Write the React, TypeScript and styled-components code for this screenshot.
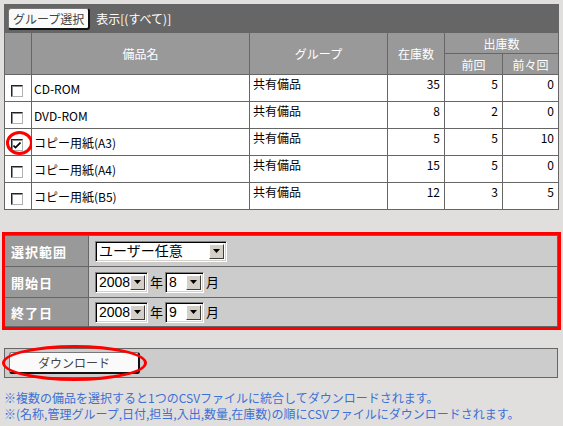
import React from 'react';
import styled, { createGlobalStyle } from 'styled-components';

const GlobalStyle = createGlobalStyle`
  body {
    margin: 0;
    background: #e0dfdd;
    font-family: "Noto Sans CJK JP", "Liberation Sans", sans-serif;
    font-size: 12px;
    color: #000;
  }
`;

const Page = styled.div`
  padding: 4px 0 0 4px;
  width: 554px;
`;

const DataTable = styled.table`
  border-collapse: collapse;
  table-layout: fixed;
  width: 554px;
`;

const BarCell = styled.td`
  background: #666;
  height: 27px;
  padding: 0 0 0 3px;
  border: 1px solid #666;
  color: #fff;
  vertical-align: middle;
`;

const BarInner = styled.div`
  display: flex;
  align-items: center;
  gap: 6px;
`;

const ClassicButton = styled.button<{ $w?: number }>`
  font-family: "Noto Sans CJK JP", sans-serif;
  font-size: 12px;
  color: #444;
  background: #fafafa;
  height: 22px;
  width: ${p => (p.$w ? `${p.$w}px` : 'auto')};
  padding: 0 4px;
  border: 1px solid #777;
  border-right: 2px solid #111;
  border-bottom: 2px solid #111;
  border-radius: 3px;
  line-height: 17px;
`;

const HeadCell = styled.th`
  background: #999;
  color: #fff;
  font-weight: normal;
  font-size: 12px;
  border: 1px solid #666;
  height: 20px;
  padding: 0;
  text-align: center;
`;

const Cell = styled.td<{ $align?: 'left' | 'right' | 'center'; $top?: boolean }>`
  box-sizing: border-box;
  background: #fff;
  border: 1px solid #666;
  height: 27px;
  padding: ${p => (p.$top ? '1px 4px 0 3px' : '2px 4px 0 2px')};
  line-height: 16px;
  text-align: ${p => p.$align ?? 'left'};
  vertical-align: ${p => (p.$top ? 'top' : 'middle')};
  position: relative;
  white-space: nowrap;
`;

const Check = styled.span`
  display: inline-flex;
  align-items: center;
  justify-content: center;
  box-sizing: border-box;
  width: 12px;
  height: 12px;
  margin-top: 2px;
  vertical-align: middle;
  background: #fff;
  border: 1px solid;
  border-color: #222 #b0b0b0 #b0b0b0 #222;
  box-shadow: inset 1px 1px 0 #909090;
`;

const Ring = styled.span<{ $l: number; $t: number; $w: number; $h: number }>`
  position: absolute;
  left: ${p => p.$l}px;
  top: ${p => p.$t}px;
  width: ${p => p.$w}px;
  height: ${p => p.$h}px;
  box-sizing: border-box;
  border: 3px solid #f00;
  border-radius: 50%;
  pointer-events: none;
`;

const FormWrap = styled.div`
  position: relative;
  margin-top: 25px;
  &::after {
    content: '';
    position: absolute;
    left: -2px;
    top: -3px;
    right: -3px;
    bottom: -3px;
    border: 3px solid #f00;
    pointer-events: none;
  }
`;

const FormTable = styled.table`
  border-collapse: collapse;
  table-layout: fixed;
  width: 554px;
`;

const LabelCell = styled.th`
  background: #999;
  color: #fff;
  font-size: 13px;
  font-weight: bold;
  letter-spacing: 1px;
  text-align: left;
  padding: 0 0 0 6px;
  border: 1px solid #666;
`;

const ValueCell = styled.td<{ $h: number }>`
  box-sizing: border-box;
  background: #ccc;
  height: ${p => p.$h}px;
  padding: 0 0 0 6px;
  border: 1px solid #666;
`;

const ValueRow = styled.div`
  display: flex;
  align-items: center;
  gap: 1px;
  font-size: 13px;
  line-height: 16px;
`;

const SelectBox = styled.div<{ $w: number }>`
  display: inline-flex;
  align-items: stretch;
  box-sizing: border-box;
  width: ${p => p.$w}px;
  height: 21px;
  background: #fff;
  border: 1px solid;
  border-color: #808080 #fff #fff #808080;
  box-shadow: inset 1px 1px 0 #000, inset -1px -1px 0 #d4d0c8;
  padding: 2px;
`;

const SelectText = styled.span`
  flex: 1;
  font-family: "Liberation Sans", "Noto Sans CJK JP", sans-serif;
  font-size: 14px;
  line-height: 15px;
  padding-left: 1px;
`;

const DropButton = styled.span`
  display: flex;
  align-items: center;
  justify-content: center;
  width: 15px;
  box-sizing: border-box;
  background: #d4d0c8;
  border: 1px solid;
  border-color: #fff #404040 #404040 #fff;
`;

const Unit = styled.span`
  margin: 0 1px;
  font-size: 13px;
`;

const DownloadWrap = styled.div`
  position: relative;
  margin-top: 21px;
`;

const DownloadBar = styled.div`
  box-sizing: border-box;
  height: 30px;
  background: #ccc;
  border: 1px solid #666;
  padding: 3px 0 0 4px;
`;

const Notes = styled.div`
  margin-top: 12px;
  color: #3d6fd6;
  font-size: 12px;
  line-height: 16px;
  white-space: nowrap;
`;

const Arrow = () => (
  <svg width="7" height="4" viewBox="0 0 7 4">
    <path d="M0 0h7L3.5 4z" fill="#000" />
  </svg>
);

const Select = ({ w, value }: { w: number; value: string }) => (
  <SelectBox $w={w}>
    <SelectText>{value}</SelectText>
    <DropButton>
      <Arrow />
    </DropButton>
  </SelectBox>
);

const rows = [
  { name: 'CD-ROM', group: '共有備品', stock: 35, prev: 5, prev2: 0, checked: false },
  { name: 'DVD-ROM', group: '共有備品', stock: 8, prev: 2, prev2: 0, checked: false },
  { name: 'コピー用紙(A3)', group: '共有備品', stock: 5, prev: 5, prev2: 10, checked: true },
  { name: 'コピー用紙(A4)', group: '共有備品', stock: 15, prev: 5, prev2: 0, checked: false },
  { name: 'コピー用紙(B5)', group: '共有備品', stock: 12, prev: 3, prev2: 5, checked: false },
];

export default function App() {
  return (
    <Page>
      <GlobalStyle />
      <DataTable>
        <colgroup>
          <col style={{ width: 27 }} />
          <col style={{ width: 218 }} />
          <col style={{ width: 138 }} />
          <col style={{ width: 57 }} />
          <col style={{ width: 58 }} />
          <col style={{ width: 56 }} />
        </colgroup>
        <tbody>
          <tr>
            <BarCell colSpan={6}>
              <BarInner>
                <ClassicButton>グループ選択</ClassicButton>
                <span>表示[(すべて)]</span>
              </BarInner>
            </BarCell>
          </tr>
          <tr>
            <HeadCell rowSpan={2} />
            <HeadCell rowSpan={2}>備品名</HeadCell>
            <HeadCell rowSpan={2}>グループ</HeadCell>
            <HeadCell rowSpan={2}>在庫数</HeadCell>
            <HeadCell colSpan={2}>出庫数</HeadCell>
          </tr>
          <tr>
            <HeadCell>前回</HeadCell>
            <HeadCell>前々回</HeadCell>
          </tr>
          {rows.map(r => (
            <tr key={r.name}>
              <Cell $align="center">
                <Check>
                  {r.checked && (
                    <svg width="8" height="7" viewBox="0 0 8 7">
                      <path d="M0.5 3.5l2 2 5-5" stroke="#000" strokeWidth="1.6" fill="none" />
                    </svg>
                  )}
                </Check>
                {r.checked && <Ring $l={1} $t={2} $w={27} $h={24} />}
              </Cell>
              <Cell>{r.name}</Cell>
              <Cell $top>{r.group}</Cell>
              <Cell $top $align="right">{r.stock}</Cell>
              <Cell $top $align="right">{r.prev}</Cell>
              <Cell $top $align="right">{r.prev2}</Cell>
            </tr>
          ))}
        </tbody>
      </DataTable>

      <FormWrap>
        <FormTable>
          <colgroup>
            <col style={{ width: 84 }} />
            <col />
          </colgroup>
          <tbody>
            <tr>
              <LabelCell>選択範囲</LabelCell>
              <ValueCell $h={31}>
                <ValueRow>
                  <Select w={132} value="ユーザー任意" />
                </ValueRow>
              </ValueCell>
            </tr>
            <tr>
              <LabelCell>開始日</LabelCell>
              <ValueCell $h={31}>
                <ValueRow>
                  <Select w={53} value="2008" />
                  <Unit>年</Unit>
                  <Select w={39} value="8" />
                  <Unit>月</Unit>
                </ValueRow>
              </ValueCell>
            </tr>
            <tr>
              <LabelCell>終了日</LabelCell>
              <ValueCell $h={29}>
                <ValueRow>
                  <Select w={53} value="2008" />
                  <Unit>年</Unit>
                  <Select w={39} value="9" />
                  <Unit>月</Unit>
                </ValueRow>
              </ValueCell>
            </tr>
          </tbody>
        </FormTable>
      </FormWrap>

      <DownloadWrap>
        <DownloadBar>
          <ClassicButton $w={131}>ダウンロード</ClassicButton>
        </DownloadBar>
        <Ring $l={-2} $t={-3} $w={145} $h={36} />
      </DownloadWrap>

      <Notes>
        <div>※複数の備品を選択すると1つのCSVファイルに統合してダウンロードされます。</div>
        <div>※(名称,管理グループ,日付,担当,入出,数量,在庫数)の順にCSVファイルにダウンロードされます。</div>
      </Notes>
    </Page>
  );
}
